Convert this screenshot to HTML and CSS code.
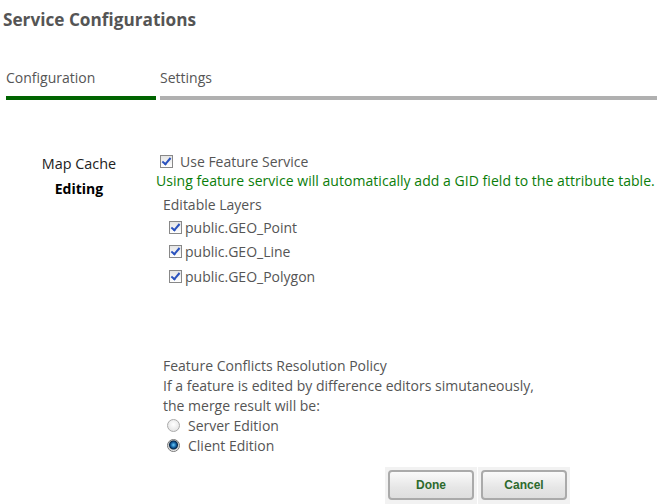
FILE: index.html
```html
<!DOCTYPE html>
<html>
<head>
<meta charset="utf-8">
<link rel="stylesheet" href="styles.css">
</head>
<body>
<div class="page">
  <h1 class="title">Service Configurations</h1>
  <div class="tabs">
    <div class="tab active">Configuration</div>
    <div class="tab">Settings</div>
  </div>
  <div class="content">
    <div class="side">
      <div class="side-item">Map Cache</div>
      <div class="side-item current">Editing</div>
    </div>
    <div class="main">
      <label class="use-fs"><span class="cb checked"></span>Use Feature Service</label>
      <div class="note">Using feature service will automatically add a GID field to the attribute table.</div>
      <div class="layers">
        <div class="layers-title">Editable Layers</div>
        <label class="layer"><span class="cb checked"></span>public.GEO_Point</label>
        <label class="layer"><span class="cb checked"></span>public.GEO_Line</label>
        <label class="layer"><span class="cb checked"></span>public.GEO_Polygon</label>
      </div>
      <div class="policy">
        <div>Feature Conflicts Resolution Policy</div>
        <div>If a feature is edited by difference editors simutaneously,</div>
        <div>the merge result will be:</div>
        <label class="radio-row"><span class="radio"></span>Server Edition</label>
        <label class="radio-row"><span class="radio on"></span>Client Edition</label>
      </div>
      <div class="buttons">
        <div class="btn-wrap"><button class="btn">Done</button></div>
        <div class="btn-wrap"><button class="btn">Cancel</button></div>
      </div>
    </div>
  </div>
</div>
</body>
</html>
```
FILE: styles.css
```css
html, body { margin: 0; padding: 0; background: #fff; }
body { font-family: "Open Sans", "Noto Sans", sans-serif; font-size: 14px; color: #555; }
.page { width: 663px; height: 504px; overflow: hidden; }
.title { margin: 0; padding: 8px 0 0 3px; font-size: 17.2px; font-weight: 700; color: #555; line-height: 24px; }
.tabs { display: flex; gap: 4px; padding: 36px 6px 0 6px; }
.tab { height: 28px; line-height: 20px; border-bottom: 4px solid #b0b0b0; flex: 1; color: #555; }
.tab.active { flex: 0 0 150px; border-bottom-color: #006400; }
.content { display: flex; padding-top: 52px; }
.side { width: 156px; display: flex; flex-direction: column; align-items: center; padding-left: 2px; box-sizing: border-box; }
.side-item { color: #222; line-height: 25px; margin-top: -1px; font-size: 14.4px; }
.side-item.current { font-weight: 700; color: #000; margin-top: 0; font-size: 14px; }
.main { flex: 1; display: flex; flex-direction: column; }
.use-fs { display: flex; align-items: center; padding-left: 4px; height: 18px; }
.use-fs .cb { margin-right: 7px; }
.note { color: #0a7d0a; line-height: 20px; margin-top: 1px; letter-spacing: 0.04px; }
.layers { padding-left: 7px; margin-top: 4px; }
.layers-title { line-height: 20px; }
.layer { display: flex; align-items: center; height: 24.5px; padding-left: 6px; }
.layer .cb { margin-right: 3px; }
.cb { width: 11px; height: 11px; border: 1px solid #888; background: linear-gradient(#e4e4e4, #fff); position: relative; flex: none; }
.cb.checked::after { content: ""; position: absolute; left: 3px; top: 0px; width: 3px; height: 7px; border: solid #2a52be; border-width: 0 2px 2px 0; transform: rotate(40deg); }
.policy { padding-left: 7px; margin-top: 67px; line-height: 20px; }
.radio-row { display: flex; align-items: center; height: 20px; padding-left: 4px; }
.radio { width: 11px; height: 11px; border-radius: 50%; border: 1px solid #aaa; background: radial-gradient(circle at 50% 40%, #fff, #ddd); margin-right: 8px; flex: none; }
.radio.on { background: radial-gradient(circle at 50% 45%, #6cf 0, #0a4f8f 3px, #0a2a4a 4px, #ccc 5px, #fff 6px); border-color: #777; }
.buttons { display: flex; gap: 1px; padding-left: 229px; margin-top: 11px; }
.btn-wrap { background: #f2f2f2; padding: 3px 3px 4px; }
.btn { display: block; width: 86px; height: 30px; border: 2px solid #aaa; border-radius: 4px; background: linear-gradient(#fafafa, #e6e6e6 60%, #dedede); font-family: "Liberation Sans", Arial, sans-serif; font-weight: 700; font-size: 12px; color: #2d6a2d; }
```
